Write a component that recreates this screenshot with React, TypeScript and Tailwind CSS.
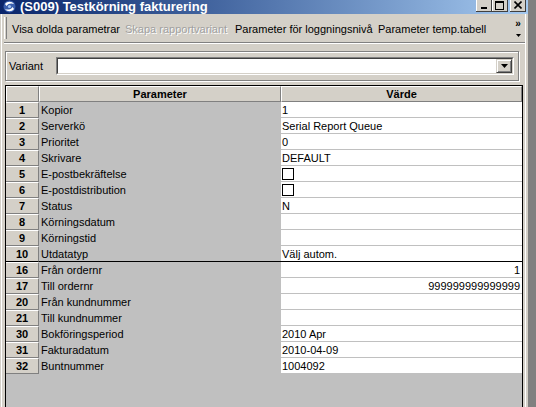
import React from "react";

type Row = { n: string; p: string; v?: string; check?: boolean; right?: boolean; divider?: boolean };

const rows: Row[] = [
  { n: "1", p: "Kopior", v: "1" },
  { n: "2", p: "Serverkö", v: "Serial Report Queue" },
  { n: "3", p: "Prioritet", v: "0" },
  { n: "4", p: "Skrivare", v: "DEFAULT" },
  { n: "5", p: "E-postbekräftelse", check: true },
  { n: "6", p: "E-postdistribution", check: true },
  { n: "7", p: "Status", v: "N" },
  { n: "8", p: "Körningsdatum" },
  { n: "9", p: "Körningstid" },
  { n: "10", p: "Utdatatyp", v: "Välj autom.", divider: true },
  { n: "16", p: "Från ordernr", v: "1", right: true },
  { n: "17", p: "Till ordernr", v: "999999999999999", right: true },
  { n: "20", p: "Från kundnummer" },
  { n: "21", p: "Till kundnummer" },
  { n: "30", p: "Bokföringsperiod", v: "2010 Apr" },
  { n: "31", p: "Fakturadatum", v: "2010-04-09" },
  { n: "32", p: "Buntnummer", v: "1004092" },
];

function TitleIcon() {
  return (
    <svg width="15" height="13" viewBox="0 0 15 13">
      <circle cx="7.5" cy="6.5" r="6" fill="#3a5fae" />
      <path d="M3 4 C5 1 10 1 12 4 C10 3 6 3 4.5 6 Z" fill="#ffffff" />
      <path d="M12 9 C10 12 5 12 3 9 C5 10 9 10 10.5 7 Z" fill="#ffffff" />
      <circle cx="7.5" cy="6.5" r="1.6" fill="#9fc0f0" />
    </svg>
  );
}

function CaptionButton({ kind }: { kind: "min" | "max" | "close" }) {
  return (
    <div className="w-[16px] h-[12px] bg-[#d4d0c8] border-r border-b border-r-[#404040] border-b-[#404040] shadow-[inset_1px_0_0_#ffffff] flex items-end justify-center">
      {kind === "min" && <div className="w-[6px] h-[2px] bg-black mb-[2px]" />}
      {kind === "max" && (
        <div className="w-[9px] h-[9px] border border-black border-t-2 mb-[1px]" />
      )}
      {kind === "close" && (
        <svg width="8" height="8" viewBox="0 0 8 8" className="mb-[2px]">
          <path d="M0.5 0.5 L7.5 7.5 M7.5 0.5 L0.5 7.5" stroke="#000" strokeWidth="1.6" />
        </svg>
      )}
    </div>
  );
}

export default function App() {
  return (
    <div className="w-[536px] h-[407px] flex bg-[#808080] overflow-hidden font-['Liberation_Sans',Arial,sans-serif] text-[11px] text-black">
      {/* fönster */}
      <div className="w-[528px] h-full flex flex-col bg-[#d4d0c8]">
        {/* titelrad */}
        <div className="h-[14px] flex items-start bg-linear-to-r from-[#0a246a] to-[#a6caf0] pl-[2px] pr-[2px]">
          <TitleIcon />
          <span className="ml-[3px] text-white font-bold text-[13px] leading-[14px] whitespace-nowrap">
            (S009) Testkörning fakturering
          </span>
          <div className="ml-auto flex">
            <CaptionButton kind="min" />
            <CaptionButton kind="max" />
            <div className="w-[2px]" />
            <CaptionButton kind="close" />
          </div>
        </div>

        <div className="flex-1 flex min-h-0">
          {/* vänster ram */}
          <div className="w-[4px] flex">
            <div className="w-px bg-[#d4d0c8]" />
            <div className="w-px bg-white" />
            <div className="w-px bg-[#d4d0c8]" />
            <div className="w-px bg-[#d4d0c8]" />
          </div>

          <div className="flex-1 flex flex-col min-w-0">
            {/* verktygsrad */}
            <div className="h-[28px] flex items-center">
              <div className="w-[3px] h-[22px] border-l border-l-white border-r border-r-[#808080]" />
              <div className="ml-[5px] pt-[2px] w-[113px] whitespace-nowrap">Visa dolda parametrar</div>
              <div className="pt-[2px] w-[110px] whitespace-nowrap text-[#a0a0a0] [text-shadow:1px_1px_0_#ffffff]">
                Skapa rapportvariant
              </div>
              <div className="pt-[2px] w-[143px] whitespace-nowrap">Parameter för loggningsnivå</div>
              <div className="pt-[2px] whitespace-nowrap">Parameter temp.tabell</div>
              <div className="ml-auto mr-[3px] w-[8px] flex flex-col items-center self-stretch pt-[5px]">
                <span className="font-bold text-[10px] leading-[10px]">»</span>
                <svg width="5" height="3" viewBox="0 0 5 3" className="mt-[5px]">
                  <path d="M0 0 H5 L2.5 3 Z" fill="#000" />
                </svg>
              </div>
            </div>
            <div className="h-px bg-[#808080]" />
            <div className="h-px bg-white" />

            {/* innehåll */}
            <div className="flex-1 flex flex-col pl-[1px] pr-[2px] pt-[7px] min-h-0">
              {/* variant */}
              <div className="w-[514px] h-[30px] border border-[#808080] shadow-[inset_1px_1px_0_#ffffff,1px_1px_0_#ffffff] flex items-center">
                <span className="ml-[3px] w-[47px]">Variant</span>
                <div className="w-[458px] h-[18px] border border-t-[#808080] border-l-[#808080] border-b-white border-r-white">
                  <div className="h-full border border-t-[#404040] border-l-[#404040] border-b-[#d4d0c8] border-r-[#d4d0c8] bg-white flex justify-end">
                    <div className="w-[16px] h-full bg-[#d4d0c8] border border-t-[#d4d0c8] border-l-[#d4d0c8] border-b-[#404040] border-r-[#404040] shadow-[inset_1px_1px_0_#ffffff,inset_-1px_-1px_0_#808080] flex items-center justify-center">
                      <svg width="7" height="4" viewBox="0 0 7 4">
                        <path d="M0 0 H7 L3.5 4 Z" fill="#000" />
                      </svg>
                    </div>
                  </div>
                </div>
              </div>

              {/* tabell */}
              <div className="mt-[4px] flex-1 flex flex-col border-l border-t border-r border-black bg-[#c0c0c0] min-h-0">
                <div className="h-[16px] flex font-bold">
                  <div className="w-[33px] bg-[#d4d0c8] border-t border-l border-t-white border-l-white border-b border-r border-b-[#808080] border-r-[#808080]" />
                  <div className="w-[242px] pt-px bg-[#d4d0c8] border-t border-l border-t-white border-l-white border-b border-r border-b-[#808080] border-r-[#808080] flex items-center justify-center">
                    Parameter
                  </div>
                  <div className="flex-1 pt-px bg-[#d4d0c8] border-t border-l border-t-white border-l-white border-b border-r border-b-[#808080] border-r-[#808080] flex items-center justify-center">
                    Värde
                  </div>
                </div>
                {rows.map((r) => (
                  <div key={r.n} className="h-[16px] flex">
                    <div
                      className={`w-[33px] pt-px bg-[#d4d0c8] border-t border-t-white border-r border-r-[#808080] border-b font-bold flex items-center justify-center ${
                        r.divider ? "border-b-black" : "border-b-[#808080]"
                      }`}
                    >
                      {r.n}
                    </div>
                    <div
                      className={`w-[242px] pt-px bg-[#c0c0c0] border-b pl-[2px] flex items-center whitespace-nowrap ${
                        r.divider ? "border-b-black" : "border-b-[#c0c0c0]"
                      }`}
                    >
                      {r.p}
                    </div>
                    <div
                      className={`flex-1 bg-white border-b flex items-center whitespace-nowrap ${
                        r.check ? "" : "pt-px"
                      } ${r.right ? "justify-end pr-[2px]" : "pl-[1px]"} ${
                        r.divider ? "border-b-black" : "border-b-[#c0c0c0]"
                      }`}
                    >
                      {r.check ? (
                        <div className="w-[12px] h-[12px] border border-black bg-white" />
                      ) : (
                        r.v
                      )}
                    </div>
                  </div>
                ))}
              </div>
            </div>
          </div>

          {/* höger ram */}
          <div className="w-[3px] flex">
            <div className="w-px bg-white" />
            <div className="w-px bg-[#d4d0c8]" />
            <div className="w-px bg-[#d4d0c8]" />
          </div>
        </div>
      </div>
      <div className="flex-1" />
    </div>
  );
}
